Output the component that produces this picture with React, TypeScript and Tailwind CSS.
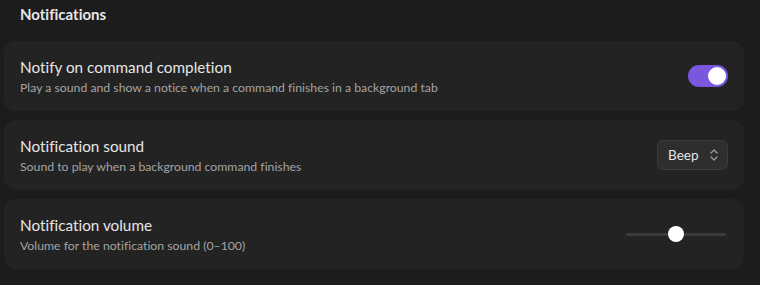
import React from "react";

function Toggle() {
  return (
    <div className="flex h-[22px] w-[40px] items-center justify-end rounded-full bg-[#7b57e0] px-[2px]">
      <div className="h-[18px] w-[18px] rounded-full bg-white" />
    </div>
  );
}

function SelectBox() {
  return (
    <div className="flex h-[30px] w-[71px] items-center justify-between rounded-[6px] border border-[#3a3a3a] bg-[#2e2e2e] pl-[10px] pr-[8px] text-[13.5px] text-[#e4e4e4]">
      <span>Beep</span>
      <svg width="10" height="14" viewBox="0 0 10 14" fill="none" stroke="#9a9a9a" strokeWidth="1.3" strokeLinecap="round" strokeLinejoin="round">
        <path d="M2 5 L5 2 L8 5" />
        <path d="M2 9 L5 12 L8 9" />
      </svg>
    </div>
  );
}

function Slider() {
  return (
    <div className="relative mr-[2px] flex h-[18px] w-[100px] items-center">
      <div className="h-[3px] w-full rounded-full bg-[#3a3a3a]" />
      <div className="absolute left-[42px] top-[1px] h-[16px] w-[16px] rounded-full bg-white" />
    </div>
  );
}

function Row({ title, desc, control }: { title: string; desc: string; control: React.ReactNode }) {
  return (
    <div className="flex h-[70px] items-center justify-between rounded-[12px] bg-[#232323] pl-[16px] pr-[16px]">
      <div className="flex flex-col">
        <div className="text-[15.3px] leading-[20px] text-[#e6e6e6]">{title}</div>
        <div className="mt-[3px] text-[12.25px] leading-[16px] text-[#a3a3a3]">{desc}</div>
      </div>
      {control}
    </div>
  );
}

export default function App() {
  return (
    <div
      className="h-[285px] w-[760px] overflow-hidden bg-[#1c1c1c] pl-[4px] pr-[16px] [font-variant-ligatures:none]"
      style={{ fontFamily: 'Lato, "Noto Sans", sans-serif' }}
    >
      <div className="pl-[16px] pt-[3px] text-[15px] font-bold leading-[22px] text-[#e6e6e6]">Notifications</div>
      <div className="mt-[16px] flex flex-col gap-[9px]">
        <Row
          title="Notify on command completion"
          desc="Play a sound and show a notice when a command finishes in a background tab"
          control={<Toggle />}
        />
        <Row
          title="Notification sound"
          desc="Sound to play when a background command finishes"
          control={<SelectBox />}
        />
        <Row
          title="Notification volume"
          desc="Volume for the notification sound (0–100)"
          control={<Slider />}
        />
      </div>
    </div>
  );
}
